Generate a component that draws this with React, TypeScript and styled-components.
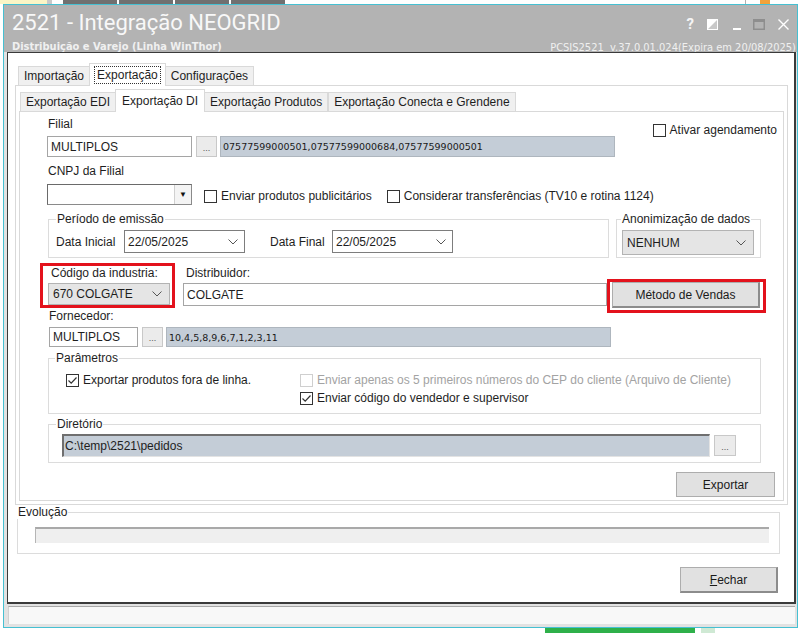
import React from 'react';
import styled, { createGlobalStyle, css } from 'styled-components';

const GlobalStyle = createGlobalStyle`
  html, body { margin: 0; padding: 0; background: #fff; }
  body {
    font-family: "Liberation Sans", Arial, sans-serif;
    font-size: 12px;
    color: #1e1e1e;
  }
  * { box-sizing: border-box; }
`;

const Page = styled.div`
  width: 802px;
  height: 633px;
  overflow: hidden;
  background: #fff;
  display: flex;
  flex-direction: column;
`;

const Strip = styled.div<{ $h: number }>`
  height: ${p => p.$h}px;
  display: flex;
  flex-shrink: 0;
`;

const StripBlock = styled.div<{ $w: number; $color: string; $ml?: number }>`
  width: ${p => p.$w}px;
  margin-left: ${p => p.$ml ?? 0}px;
  background: ${p => p.$color};
`;

const Window = styled.div`
  margin-left: 3px;
  width: 795px;
  height: 624px;
  flex-shrink: 0;
  border: 1px solid #46c0d2;
  background: #e2e2e2;
  display: flex;
  flex-direction: column;
`;

const TitleBar = styled.div`
  height: 47px;
  flex-shrink: 0;
  background: #b3b3b3;
  color: #fff;
  display: flex;
  justify-content: space-between;
  padding: 0 1px 0 8px;
`;

const TitleLeft = styled.div`
  display: flex;
  flex-direction: column;
`;

const TitleText = styled.div`
  font-family: Roboto, "Liberation Sans", sans-serif;
  font-size: 22px;
  line-height: 26px;
  margin-top: 5px;
  color: #f8f8f8;
  white-space: nowrap;
`;

const SubTitle = styled.div`
  font-family: "Liberation Sans Narrow", "DejaVu Sans Condensed", Roboto, sans-serif;
  font-weight: 700;
  font-size: 11px;
  line-height: 12px;
  margin-top: 5px;
  color: #f0f0f0;
  white-space: nowrap;
`;

const TitleRight = styled.div`
  display: flex;
  flex-direction: column;
  align-items: flex-end;
`;

const WindowButtons = styled.div`
  display: flex;
  align-items: center;
  height: 14px;
  margin-top: 12px;
  margin-right: 7px;
`;

const IconSlot = styled.span<{ $ml: number }>`
  display: inline-flex;
  margin-left: ${p => p.$ml}px;
  color: #fff;
`;

const HelpGlyph = styled.span`
  font-family: Roboto, sans-serif;
  font-weight: 700;
  font-size: 15px;
  line-height: 14px;
  color: #f5f5f5;
`;

const Version = styled.div`
  font-family: "Liberation Sans Narrow", "DejaVu Sans Condensed", Roboto, sans-serif;
  font-size: 11px;
  line-height: 12px;
  margin-top: 11px;
  color: #f0f0f0;
  white-space: pre;
`;

const Client = styled.div`
  margin: 0 1px 0 3px;
  height: 552px;
  flex-shrink: 0;
  background: #fff;
  border: 1px solid #3a3a3a;
  border-right-width: 2px;
  border-bottom-width: 2px;
  padding: 10px 0 0 7px;
  display: flex;
  flex-direction: column;
`;

const TabStrip = styled.div<{ $ml?: number; $mt?: number }>`
  display: flex;
  align-items: flex-end;
  height: 22px;
  margin-left: ${p => p.$ml ?? 0}px;
  margin-top: ${p => p.$mt ?? 0}px;
  position: relative;
  z-index: 1;
`;

const Tab = styled.div<{ $active?: boolean }>`
  height: ${p => (p.$active ? 23 : 19)}px;
  padding: 0 5px;
  display: flex;
  align-items: center;
  white-space: nowrap;
  border: 1px solid #d9d9d9;
  border-bottom: none;
  background: ${p => (p.$active ? '#fff' : '#f0f0f0')};
  margin-bottom: ${p => (p.$active ? -1 : 0)}px;
  ${p =>
    p.$active &&
    css`
      padding: 0 6px;
      margin-left: -1px;
      margin-right: -1px;
      position: relative;
      z-index: 2;
    `}
`;

const FocusText = styled.span`
  outline: 1px dotted #333;
  outline-offset: 1px;
  padding: 0 1px;
`;

const TabPanel = styled.div<{ $w: number; $h: number; $ml?: number }>`
  width: ${p => p.$w}px;
  height: ${p => p.$h}px;
  margin-left: ${p => p.$ml ?? 0}px;
  border: 1px solid #d9d9d9;
  background: #fff;
  display: flex;
  flex-direction: column;
`;

const FormBody = styled.div`
  display: flex;
  flex-direction: column;
  padding: 5px 8px 0 27px;
`;

const Row = styled.div<{ $mt?: number; $ml?: number; $align?: string; $justify?: string; $pr?: number }>`
  display: flex;
  align-items: ${p => p.$align ?? 'flex-start'};
  justify-content: ${p => p.$justify ?? 'flex-start'};
  margin-top: ${p => p.$mt ?? 0}px;
  margin-left: ${p => p.$ml ?? 0}px;
  padding-right: ${p => p.$pr ?? 0}px;
`;

const Column = styled.div<{ $mt?: number; $ml?: number; $gap?: number; $w?: number }>`
  display: flex;
  flex-direction: column;
  gap: ${p => p.$gap ?? 0}px;
  margin-top: ${p => p.$mt ?? 0}px;
  margin-left: ${p => p.$ml ?? 0}px;
  ${p => p.$w !== undefined && css`width: ${p.$w}px; flex-shrink: 0;`}
`;

const FieldLabel = styled.div<{ $ml?: number; $mt?: number; $w?: number }>`
  height: 14px;
  line-height: 14px;
  white-space: nowrap;
  margin-left: ${p => p.$ml ?? 0}px;
  margin-top: ${p => p.$mt ?? 0}px;
  ${p => p.$w !== undefined && css`width: ${p.$w}px; flex-shrink: 0;`}
`;

const boxSize = css<{ $w: number; $h: number; $ml?: number; $mt?: number }>`
  width: ${p => p.$w}px;
  height: ${p => p.$h}px;
  margin-left: ${p => p.$ml ?? 0}px;
  margin-top: ${p => p.$mt ?? 0}px;
  flex-shrink: 0;
  display: flex;
  align-items: center;
  white-space: nowrap;
  overflow: hidden;
`;

type BoxProps = { $w: number; $h: number; $ml?: number; $mt?: number };

const TextInput = styled.div<BoxProps>`
  ${boxSize}
  background: #fff;
  border: 1px solid #a5a5a5;
  padding-left: 3px;
`;

const InfoField = styled.div<BoxProps>`
  ${boxSize}
  background: #c4cdd7;
  border: 1px solid #aeb6be;
  padding-left: 2px;
  font-family: "DejaVu Sans", sans-serif;
  font-size: 9.5px;
  color: #1a1a1a;
`;

const PathField = styled.div<BoxProps>`
  ${boxSize}
  background: #c4cdd7;
  border-top: 2px solid #6f6f6f;
  border-left: 2px solid #6f6f6f;
  border-right: 1px solid #e3e3e3;
  border-bottom: 1px solid #e3e3e3;
  padding-left: 1px;
`;

const DotsButton = styled.div<BoxProps>`
  ${boxSize}
  background: #ebebeb;
  border: 1px solid #c8c8c8;
  justify-content: center;
  align-items: flex-end;
  padding-bottom: 3px;
  font-size: 9px;
  line-height: 9px;
  color: #555;
`;

const GrayCombo = styled.div<BoxProps>`
  ${boxSize}
  background: #e5e5e5;
  border: 1px solid #b3b3b3;
  justify-content: space-between;
  padding: 0 7px 0 4px;
`;

const DateBox = styled.div<BoxProps>`
  ${boxSize}
  background: #fff;
  border: 1px solid #7d7d7d;
  justify-content: space-between;
  padding: 0 6px 0 3px;
`;

const ClassicCombo = styled.div<BoxProps>`
  ${boxSize}
  background: #fff;
  border: 1px solid #8a8a8a;
  border-top-color: #6a6a6a;
  border-left-color: #6a6a6a;
  justify-content: flex-end;
`;

const ArrowCell = styled.div`
  width: 17px;
  height: 100%;
  border-left: 1px solid #d0d0d0;
  background: #f4f4f4;
  display: flex;
  align-items: center;
  justify-content: center;
  font-size: 8px;
  color: #111;
`;

const PushButton = styled.div<BoxProps & { $raised?: boolean }>`
  ${boxSize}
  justify-content: center;
  background: #e1e1e1;
  border: 1px solid #adadad;
  color: #1a1a1a;
  ${p =>
    p.$raised &&
    css`
      border-right: 2px solid #8c8c8c;
      border-bottom: 2px solid #8c8c8c;
    `}
`;

const Highlight = styled.div<{ $pad: string; $ml?: number; $mt?: number; $mb?: number }>`
  border: 3px solid #e3121c;
  padding: ${p => p.$pad};
  margin-left: ${p => p.$ml ?? 0}px;
  margin-top: ${p => p.$mt ?? 0}px;
  margin-bottom: ${p => p.$mb ?? 0}px;
  display: flex;
  flex-direction: column;
  flex-shrink: 0;
`;

const Group = styled.fieldset<{ $w: number; $pl: number; $pt: number; $pb: number; $ml?: number; $mt?: number }>`
  width: ${p => p.$w}px;
  min-width: 0;
  flex-shrink: 0;
  margin: ${p => p.$mt ?? 0}px 0 0 ${p => p.$ml ?? 0}px;
  padding: ${p => p.$pt}px 0 ${p => p.$pb}px ${p => p.$pl}px;
  border: 1px solid #dcdcdc;
`;

const Legend = styled.legend<{ $offset: number }>`
  padding: 0 1px;
  margin-left: ${p => p.$offset}px;
  font-size: 12px;
  line-height: 14px;
  height: 14px;
  color: #1e1e1e;
`;

const CheckRow = styled.div<{ $disabled?: boolean; $ml?: number; $mt?: number; $mr?: number }>`
  display: flex;
  align-items: center;
  gap: 4px;
  height: 18px;
  white-space: nowrap;
  flex-shrink: 0;
  color: ${p => (p.$disabled ? '#a3a3a3' : '#1e1e1e')};
  margin-left: ${p => p.$ml ?? 0}px;
  margin-top: ${p => p.$mt ?? 0}px;
  margin-right: ${p => p.$mr ?? 0}px;
`;

const CheckBox = styled.span<{ $disabled?: boolean }>`
  width: 13px;
  height: 13px;
  flex-shrink: 0;
  border: 1px solid ${p => (p.$disabled ? '#cfcfcf' : '#333')};
  background: #fff;
  display: inline-flex;
  align-items: center;
  justify-content: center;
`;

const ProgressTrack = styled.div<{ $w: number; $h: number }>`
  width: ${p => p.$w}px;
  height: ${p => p.$h}px;
  background: #efefef;
  border-top: 2px solid #a9a9a9;
  border-left: 1px solid #b5b5b5;
`;

const StatusBar = styled.div`
  margin: 2px 2px 0 4px;
  height: 18px;
  flex-shrink: 0;
  background: #f8f8f8;
  border-top: 1px solid #a8a8a8;
  border-left: 1px solid #d0d0d0;
`;

const Chevron = () => (
  <svg width="10" height="6" viewBox="0 0 10 6">
    <polyline points="0.5,0.5 5,5 9.5,0.5" fill="none" stroke="#555" strokeWidth="1" />
  </svg>
);

const Check = ({ checked, disabled, children, ...rest }: {
  checked?: boolean;
  disabled?: boolean;
  children: React.ReactNode;
  $ml?: number;
  $mt?: number;
  $mr?: number;
}) => (
  <CheckRow $disabled={disabled} {...rest}>
    <CheckBox $disabled={disabled}>
      {checked && (
        <svg width="11" height="11" viewBox="0 0 11 11">
          <polyline points="1.5,5.5 4.2,8.2 9.5,2.5" fill="none" stroke="#333" strokeWidth="1.2" />
        </svg>
      )}
    </CheckBox>
    <span>{children}</span>
  </CheckRow>
);

export default function App() {
  return (
    <>
      <GlobalStyle />
      <Page>
        <Strip $h={4}>
          <StripBlock $w={47} $color="#fbf5c6" />
          <StripBlock $w={5} $color="#c9c9c9" />
          <StripBlock $w={54} $color="#707070" $ml={11} />
          <StripBlock $w={54} $color="#707070" $ml={2} />
          <StripBlock $w={54} $color="#707070" $ml={2} />
          <StripBlock $w={54} $color="#707070" $ml={2} />
          <StripBlock $w={1} $color="#b0b0b0" $ml={460} />
          <StripBlock $w={10} $color="#f2a23a" $ml={14} />
        </Strip>

        <Window>
          <TitleBar>
            <TitleLeft>
              <TitleText>2521 - Integração NEOGRID</TitleText>
              <SubTitle>Distribuição e Varejo (Linha WinThor)</SubTitle>
            </TitleLeft>
            <TitleRight>
              <WindowButtons>
                <IconSlot $ml={0}>
                  <HelpGlyph>?</HelpGlyph>
                </IconSlot>
                <IconSlot $ml={13}>
                  <svg width="11" height="11" viewBox="0 0 11 11">
                    <rect x="0.5" y="0.5" width="10" height="10" fill="#c8c8c8" stroke="#fff" strokeWidth="1" />
                    <polygon points="0,0 11,0 0,11" fill="#fff" />
                  </svg>
                </IconSlot>
                <IconSlot $ml={15}>
                  <svg width="8" height="11" viewBox="0 0 8 11">
                    <rect x="0" y="9" width="8" height="2" fill="#fff" />
                  </svg>
                </IconSlot>
                <IconSlot $ml={12}>
                  <svg width="12" height="11" viewBox="0 0 12 11">
                    <rect x="0.75" y="0.75" width="10.5" height="9.5" fill="none" stroke="#8e8e8e" strokeWidth="1.5" />
                    <rect x="0" y="0" width="12" height="3" fill="#8e8e8e" />
                  </svg>
                </IconSlot>
                <IconSlot $ml={13}>
                  <svg width="11" height="11" viewBox="0 0 11 11">
                    <path d="M0.5 0.5 L10.5 10.5 M10.5 0.5 L0.5 10.5" stroke="#fff" strokeWidth="1.4" />
                  </svg>
                </IconSlot>
              </WindowButtons>
              <Version>PCSIS2521  v.37.0.01.024(Expira em 20/08/2025)</Version>
            </TitleRight>
          </TitleBar>

          <Client>
            <TabStrip $ml={3}>
              <Tab>Importação</Tab>
              <Tab $active>
                <FocusText>Exportação</FocusText>
              </Tab>
              <Tab>Configurações</Tab>
            </TabStrip>
            <TabPanel $w={773} $h={420}>
              <TabStrip $ml={4} $mt={3}>
                <Tab>Exportação EDI</Tab>
                <Tab $active>Exportação DI</Tab>
                <Tab>Exportação Produtos</Tab>
                <Tab>Exportação Conecta e Grendene</Tab>
              </TabStrip>
              <TabPanel $w={765} $h={390} $ml={3}>
                <FormBody>
                  <Row $justify="space-between">
                    <Column $gap={5}>
                      <FieldLabel $ml={1}>Filial</FieldLabel>
                      <Row>
                        <TextInput $w={145} $h={21}>MULTIPLOS</TextInput>
                        <DotsButton $w={21} $h={21} $ml={4}>...</DotsButton>
                        <InfoField $w={395} $h={21} $ml={3}>
                          07577599000501,07577599000684,07577599000501
                        </InfoField>
                      </Row>
                    </Column>
                    <Check $mt={4} $mr={-2}>Ativar agendamento</Check>
                  </Row>

                  <Column $mt={7} $gap={6}>
                    <FieldLabel $ml={1}>CNPJ da Filial</FieldLabel>
                    <Row $align="flex-end">
                      <ClassicCombo $w={145} $h={21}>
                        <ArrowCell>▼</ArrowCell>
                      </ClassicCombo>
                      <Check $ml={12}>Enviar produtos publicitários</Check>
                      <Check $ml={15}>Considerar transferências (TV10 e rotina 1124)</Check>
                    </Row>
                  </Column>

                  <Row $mt={7} $ml={1}>
                    <Group $w={561} $pl={7} $pt={4} $pb={4}>
                      <Legend $offset={0}>Período de emissão</Legend>
                      <Row $align="center">
                        <FieldLabel $w={68}>Data Inicial</FieldLabel>
                        <DateBox $w={121} $h={23}>
                          22/05/2025
                          <Chevron />
                        </DateBox>
                        <FieldLabel $w={62} $ml={25}>Data Final</FieldLabel>
                        <DateBox $w={121} $h={23}>
                          22/05/2025
                          <Chevron />
                        </DateBox>
                      </Row>
                    </Group>
                    <Group $w={145} $ml={7} $pl={5} $pt={4} $pb={2}>
                      <Legend $offset={-1}>Anonimização de dados</Legend>
                      <GrayCombo $w={132} $h={25}>
                        NENHUM
                        <Chevron />
                      </GrayCombo>
                    </Group>
                  </Row>

                  <Row $mt={5} $ml={-7}>
                    <Highlight $pad="0 2px 0 5px">
                      <FieldLabel $ml={3}>Código da industria:</FieldLabel>
                      <GrayCombo $w={122} $h={22} $mt={3}>
                        670 COLGATE
                        <Chevron />
                      </GrayCombo>
                    </Highlight>
                    <Column $ml={8}>
                      <FieldLabel $ml={3} $mt={3}>Distribuidor:</FieldLabel>
                      <TextInput $w={424} $h={23} $mt={3}>COLGATE</TextInput>
                    </Column>
                    <Highlight $pad="0 3px 2px 2px" $mt={16} $mb={-5}>
                      <PushButton $w={148} $h={26} $raised>Método de Vendas</PushButton>
                    </Highlight>
                  </Row>

                  <Column $mt={1} $ml={2} $gap={4}>
                    <FieldLabel>Fornecedor:</FieldLabel>
                    <Row>
                      <TextInput $w={89} $h={20}>MULTIPLOS</TextInput>
                      <DotsButton $w={21} $h={20} $ml={4}>...</DotsButton>
                      <InfoField $w={445} $h={20} $ml={3}>10,4,5,8,9,6,7,1,2,3,11</InfoField>
                    </Row>
                  </Column>

                  <Group $w={713} $ml={1} $mt={4} $pl={17} $pt={6} $pb={6}>
                    <Legend $offset={-11}>Parâmetros</Legend>
                    <Row>
                      <Column $w={234}>
                        <Check checked>Exportar produtos fora de linha.</Check>
                      </Column>
                      <Column>
                        <Check disabled>
                          Enviar apenas os 5 primeiros números do CEP do cliente (Arquivo de Cliente)
                        </Check>
                        <Check checked>Enviar código do vendedor e supervisor</Check>
                      </Column>
                    </Row>
                  </Group>

                  <Group $w={713} $ml={1} $mt={3} $pl={13} $pt={3} $pb={5}>
                    <Legend $offset={-6}>Diretório</Legend>
                    <Row>
                      <PathField $w={648} $h={23}>{'C:\\temp\\2521\\pedidos'}</PathField>
                      <DotsButton $w={22} $h={21} $ml={4} $mt={1}>...</DotsButton>
                    </Row>
                  </Group>

                  <Row $mt={9} $justify="flex-end">
                    <PushButton $w={99} $h={25}>Exportar</PushButton>
                  </Row>
                </FormBody>
              </TabPanel>
            </TabPanel>

            <Group $w={763} $ml={2} $pl={17} $pt={8} $pb={10}>
              <Legend $offset={-18}>Evolução</Legend>
              <ProgressTrack $w={734} $h={16} />
            </Group>

            <Row $mt={13} $justify="flex-end" $pr={16}>
              <PushButton $w={98} $h={26} $raised>
                <span>
                  <u>F</u>echar
                </span>
              </PushButton>
            </Row>
          </Client>

          <StatusBar />
        </Window>

        <Strip $h={5}>
          <StripBlock $w={150} $color="#2fb04a" $ml={545} />
          <StripBlock $w={14} $color="#cfe9d4" $ml={6} />
        </Strip>
      </Page>
    </>
  );
}
